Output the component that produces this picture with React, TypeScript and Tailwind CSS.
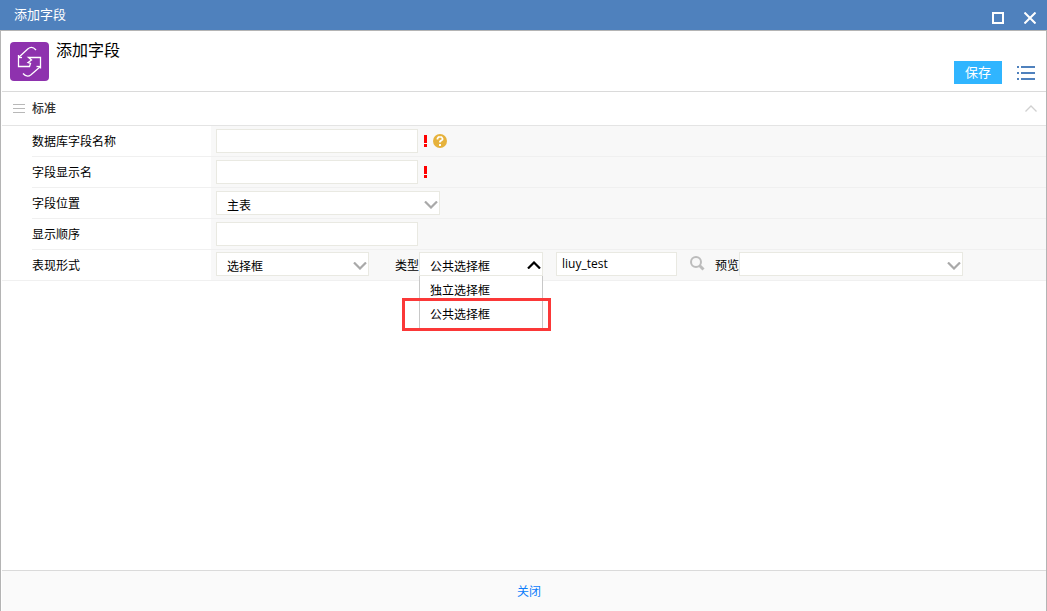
import { useState } from 'react'
import type { ReactNode } from 'react'

function Chevron({ className, up = false }: { className: string; up?: boolean }) {
  return (
    <svg
      viewBox="0 0 14 8"
      className={`pointer-events-none h-2 w-3.5 ${className}`}
      fill="none"
      stroke="currentColor"
      strokeWidth="2.2"
      aria-hidden="true"
    >
      <path d={up ? 'M1 7.5L7 1.5L13 7.5' : 'M1 0.5L7 6.5L13 0.5'} />
    </svg>
  )
}

function SelectBox({
  id,
  options,
  width,
  open = false,
  children,
}: {
  id: string
  options: string[]
  width: string
  open?: boolean
  children?: ReactNode
}) {
  return (
    <div className={`relative h-6 ${width}`}>
      <select
        id={id}
        className="block h-6 w-full appearance-none border border-[#e9e9e2] bg-white pt-1.5 pr-6 pl-[10px] text-xs leading-4 text-black outline-none"
      >
        {options.map((option) => (
          <option key={option}>{option}</option>
        ))}
      </select>
      <Chevron
        up={open}
        className={open ? 'absolute top-[9px] right-0.5 text-black' : 'absolute top-[10px] right-0.5 text-[#a9a9a9]'}
      />
      {children}
    </div>
  )
}

function TextBox({ id, width, label, value = '' }: { id: string; width: string; label?: string; value?: string }) {
  return (
    <input
      id={id}
      type="text"
      aria-label={label}
      defaultValue={value}
      className={`h-6 border border-[#e9e9e2] bg-white px-[5px] pb-0.5 text-xs text-black outline-none ${width}`}
    />
  )
}

function Required() {
  return (
    <svg viewBox="0 0 3 12" className="ml-1.5 h-3 w-[3px]" fill="#ff0000" aria-hidden="true">
      <path d="M0 0H3V8H0ZM0 9H3V12H0Z" />
    </svg>
  )
}

function Row({ id, label, last = false, children }: { id: string; label: string; last?: boolean; children: ReactNode }) {
  return (
    <div className={last ? 'border-b border-[#f0f0f0] pl-[30px]' : 'pl-[30px]'}>
      <div className={last ? 'flex h-[30px]' : 'flex h-[31px] border-b border-[#f0f0f0]'}>
        <label htmlFor={id} className="flex w-[179px] shrink-0 items-center pt-0.5">
          {label}
        </label>
        <div className={last ? 'flex flex-1 bg-[#f8f8f8] pt-0.5 pl-[5px]' : 'flex flex-1 items-center bg-[#f8f8f8] pl-[5px]'}>
          {children}
        </div>
      </div>
    </div>
  )
}

export default function App() {
  const [expanded, setExpanded] = useState(true)

  return (
    <div className="flex min-h-screen flex-col bg-white font-['Open_Sans','Noto_Sans_CJK_SC',sans-serif] text-xs text-black">
      <div className="flex h-[31px] items-center justify-between border-b border-[#b4b4b4] bg-[#4f81bd] pr-[11px] pl-3.5 text-white">
        <span className="text-[13px]">添加字段</span>
        <div className="flex gap-5 pt-1.5">
          <button type="button" aria-label="最大化">
            <svg viewBox="0 0 12 12" className="h-3 w-3" fill="none" stroke="currentColor" strokeWidth="2">
              <path d="M1 1H11V11H1Z" />
            </svg>
          </button>
          <button type="button" aria-label="关闭窗口">
            <svg viewBox="0 0 12 12" className="h-3 w-3" fill="none" stroke="currentColor" strokeWidth="2">
              <path d="M0.5 0.5L11.5 11.5M11.5 0.5L0.5 11.5" />
            </svg>
          </button>
        </div>
      </div>

      <div className="flex flex-1 flex-col border-x border-[#b4b4b4] pl-px">
        <header className="flex h-[61px] justify-between border-b border-[#dadada] pr-[11px] pl-2">
          <div className="flex items-start pt-[11px]">
            <svg viewBox="0 0 39 39" className="h-[39px] w-[39px]" fill="none" aria-hidden="true">
              <rect width="39" height="39" rx="4" fill="#8e32ae" />
              <g stroke="#fff" strokeWidth="1.3">
                <path d="M26 8C23.5 5.2 20.5 4.8 18 6.8L8.5 15.5" />
                <path d="M8.5 13V24.5H19.5L20.5 21.5L18 20.5L21.5 18L18.5 15.5H30.5V26.5" />
                <path d="M8.5 15.5H12" />
                <path d="M13 31.5C15.5 34.3 18.5 34.7 21 32.7L30.5 24.5" />
                <path d="M26.5 24.5H30.5" />
              </g>
            </svg>
            <h1 className="ml-[7px] text-base leading-4">添加字段</h1>
          </div>
          <div className="flex items-center gap-[15px] pt-[23px]">
            <button type="button" className="h-[23px] w-12 bg-[#30b5ff] text-[13px] leading-[23px] text-white">
              保存
            </button>
            <button type="button" aria-label="菜单">
              <svg viewBox="0 0 18 14" className="h-3.5 w-[18px]" fill="#4f81bd">
                <path d="M0 0H2V2H0ZM4 0H18V2H4ZM0 6H2V8H0ZM4 6H18V8H4ZM0 12H2V14H0ZM4 12H18V14H4Z" />
              </svg>
            </button>
          </div>
        </header>

        <main className="flex-1">
          <div className="flex h-[34px] items-center border-b border-[#e4e4e4] pr-[9px] pl-[11px]">
            <svg viewBox="0 0 12 9" className="h-[9px] w-3" fill="#b8b8b8" aria-hidden="true">
              <path d="M0 0H12V1H0ZM0 4H12V5H0ZM0 8H12V9H0Z" />
            </svg>
            <h2 className="ml-[7px] font-medium text-[#333]">标准</h2>
            <button type="button" aria-label="折叠" className="ml-auto" onClick={() => setExpanded(!expanded)}>
              <svg viewBox="0 0 12 7" className="h-[7px] w-3" fill="none" stroke="#d0d0d0" strokeWidth="1.3">
                <path d="M0.5 6.5L6 1L11.5 6.5" />
              </svg>
            </button>
          </div>

          {expanded && (
            <form>
              <Row id="column" label="数据库字段名称">
                <TextBox id="column" width="w-[202px]" />
                <Required />
                <svg viewBox="0 0 14 14" className="ml-1.5 h-3.5 w-3.5" fill="none" aria-hidden="true">
                  <circle cx="7" cy="7" r="7" fill="#e6b23c" />
                  <path d="M4.5 5.5V4.5L5.5 3H8.5L9.5 4.5V5.5L7 7.5V8.5" stroke="#fff" strokeWidth="1.7" />
                  <path d="M6 10H8V12H6Z" fill="#fff" />
                </svg>
              </Row>
              <Row id="display" label="字段显示名">
                <TextBox id="display" width="w-[202px]" />
                <Required />
              </Row>
              <Row id="position" label="字段位置">
                <SelectBox id="position" options={['主表']} width="w-56" />
              </Row>
              <Row id="order" label="显示顺序">
                <TextBox id="order" width="w-[202px]" />
              </Row>
              <Row id="form" label="表现形式" last>
                <SelectBox id="form" options={['选择框']} width="w-[153px]" />
                <label htmlFor="type" className="ml-[26px] pt-1 leading-5">
                  类型
                </label>
                <SelectBox id="type" options={['公共选择框', '独立选择框']} width="w-[124px]" open>
                  <ul className="absolute top-6 left-0 w-full border-x border-[#c8c8c8] bg-white pt-[3px] pb-px leading-6">
                    <li className="pl-[10px]">独立选择框</li>
                    <li className="relative pl-[10px]">
                      公共选择框
                      <span className="absolute -top-[5px] -right-[9px] -bottom-1 -left-[18px] border-3 border-[#fb3838]" />
                    </li>
                  </ul>
                </SelectBox>
                <div className="ml-[13px]">
                  <TextBox id="browser" label="选择框名称" width="w-[121px]" value="liuy_test" />
                </div>
                <button type="button" aria-label="搜索" className="ml-[13px] h-[22px]">
                  <svg viewBox="0 0 15 15" className="h-[15px] w-[15px]" fill="none" stroke="#bcbcbc">
                    <circle cx="6" cy="6" r="5" strokeWidth="2" />
                    <path d="M9.5 9.5L13.5 13.5" strokeWidth="3" />
                  </svg>
                </button>
                <label htmlFor="preview" className="ml-[10px] pt-1 leading-5">
                  预览
                </label>
                <SelectBox id="preview" options={['']} width="w-56" />
              </Row>
            </form>
          )}
        </main>

        <footer className="flex h-[41px] items-center justify-center border-t border-[#dadada] bg-[#fafafa] pt-0.5 pl-2.5">
          <button type="button" className="text-[#0c7dfa]">
            关闭
          </button>
        </footer>
      </div>
    </div>
  )
}
